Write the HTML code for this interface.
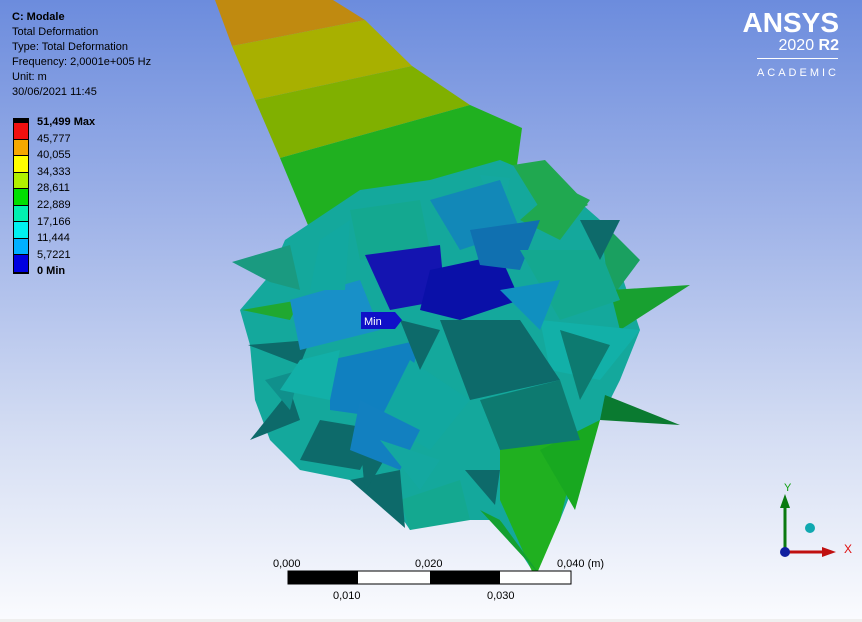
<!DOCTYPE html>
<html><head><style>
body{margin:0;width:862px;height:622px;overflow:hidden;font-family:"Liberation Sans",sans-serif;}
#bg{position:absolute;left:0;top:0;width:862px;height:619px;background:linear-gradient(#6c8cdd 0%,#9fb3e8 35%,#d4ddf3 70%,#fafbfe 100%);}
#strip{position:absolute;left:0;top:619px;width:862px;height:3px;background:#efefef;}
.t{position:absolute;font-size:11px;color:#000;line-height:15px;white-space:nowrap}
</style></head><body>
<div id="bg"></div><div id="strip"></div>
<svg style="position:absolute;left:0;top:0" width="862" height="622">
<polygon points="215,0 333,0 365,20 232,46" fill="#c08a10"/>
<polygon points="232,46 365,20 412,66 255,100" fill="#a8b000"/>
<polygon points="255,100 412,66 470,105 280,158" fill="#80b000"/>
<polygon points="280,158 470,105 522,128 515,180 310,230" fill="#20b020"/>
<polygon points="300,230 360,190 430,180 500,160 560,185 600,220 620,270 640,330 620,380 600,420 580,470 560,520 535,575 500,520 440,520 410,530 390,500 350,480 300,470 270,440 255,400 250,345 240,310 270,275 285,240" fill="#14a89c"/>
<polygon points="232,262 290,245 300,290 270,282" fill="#1a9a80"/>
<polygon points="242,310 300,300 290,320" fill="#20a830"/>
<polygon points="250,440 290,390 300,420" fill="#0d6a6a"/>
<polygon points="248,345 310,340 300,365" fill="#0d6a6a"/>
<polygon points="265,380 300,370 290,410" fill="#10908c"/>
<polygon points="600,220 640,260 610,300" fill="#1aa060"/>
<polygon points="560,185 590,200 560,240 520,220" fill="#20a850"/>
<polygon points="513,165 545,160 588,205 550,225" fill="#20a850"/>
<polygon points="480,175 510,178 500,230" fill="#14a8a0"/>
<polygon points="610,290 690,285 620,330" fill="#18a030"/>
<polygon points="605,395 680,425 600,420" fill="#0a7a30"/>
<polygon points="500,440 580,440 560,520 535,578 500,500" fill="#20b020"/>
<polygon points="540,450 600,420 575,510" fill="#18a820"/>
<polygon points="480,510 540,575 500,520" fill="#14a030"/>
<polygon points="400,500 460,480 470,520 410,530" fill="#14a890"/>
<polygon points="350,480 400,470 405,528" fill="#0d6a6a"/>
<polygon points="360,440 390,450 365,492" fill="#0d6a6a"/>
<polygon points="465,470 500,470 495,505" fill="#0d6a6a"/>
<polygon points="320,420 380,430 360,470 300,460" fill="#0d6a6a"/>
<polygon points="330,360 420,340 400,420 330,410" fill="#1080c0"/>
<polygon points="290,300 360,280 380,330 300,350" fill="#1890c8"/>
<polygon points="350,210 420,200 430,250 360,260" fill="#14a890"/>
<polygon points="430,200 500,180 520,230 460,250" fill="#1288b8"/>
<polygon points="365,255 440,245 445,300 390,310" fill="#1414b0"/>
<polygon points="430,270 500,255 520,300 460,320 420,310" fill="#0a10a8"/>
<polygon points="470,230 540,220 520,270 480,265" fill="#1070b0"/>
<polygon points="520,250 600,250 620,300 560,320" fill="#14a890"/>
<polygon points="540,320 640,330 600,380 550,370" fill="#12b0a8"/>
<polygon points="440,320 520,320 560,380 470,400" fill="#0d6a6a"/>
<polygon points="410,360 470,400 430,450 380,420" fill="#12a8a0"/>
<polygon points="480,400 560,380 580,440 500,450" fill="#0d7a70"/>
<polygon points="300,360 340,350 330,400 280,390" fill="#12b0a8"/>
<polygon points="360,400 420,430 400,470 350,450" fill="#1280c0"/>
<polygon points="580,220 620,220 600,260" fill="#0d6a6a"/>
<polygon points="320,240 350,220 345,290 310,290" fill="#12a8a0"/>
<polygon points="500,290 560,280 540,330" fill="#1090c0"/>
<polygon points="380,440 440,460 420,490" fill="#14a8a0"/>
<polygon points="560,330 610,345 580,400" fill="#0d7a70"/>
<polygon points="400,320 440,330 420,370" fill="#0d6a6a"/>
<rect x="361" y="312" width="34" height="17" fill="#1010c8"/>
<polygon points="395,312 402,320 395,329" fill="#1010c8"/>
<text x="364" y="325" font-size="11" fill="#fff" font-family="Liberation Sans">Min</text>
<rect x="13" y="118" width="16" height="156" fill="#000"/>
<rect x="14" y="123" width="14" height="16" fill="#f01010"/>
<rect x="14" y="140" width="14" height="15" fill="#f5a800"/>
<rect x="14" y="156" width="14" height="16" fill="#ffff00"/>
<rect x="14" y="173" width="14" height="15" fill="#b0f000"/>
<rect x="14" y="189" width="14" height="16" fill="#00e000"/>
<rect x="14" y="206" width="14" height="15" fill="#00f0b0"/>
<rect x="14" y="222" width="14" height="16" fill="#00f0f0"/>
<rect x="14" y="239" width="14" height="15" fill="#00b0ff"/>
<rect x="14" y="255" width="14" height="17" fill="#0000e0"/>
<text x="839" y="32" text-anchor="end" font-size="28" font-weight="bold" fill="#fff" font-family="Liberation Sans">ANSYS</text>
<text x="839" y="50" text-anchor="end" font-size="16" fill="#fff" font-family="Liberation Sans">2020 <tspan font-weight="bold">R2</tspan></text>
<rect x="757" y="58" width="81" height="1" fill="#fff"/>
<text x="839" y="76" text-anchor="end" font-size="11" letter-spacing="3" fill="#fff" font-family="Liberation Sans">ACADEMIC</text>
<rect x="288" y="571" width="283" height="13" fill="#fff" stroke="#000"/>
<rect x="288" y="571" width="70" height="13" fill="#000"/>
<rect x="430" y="571" width="70" height="13" fill="#000"/>
<g font-size="11" font-family="Liberation Sans" fill="#000">
<text x="273" y="567">0,000</text><text x="415" y="567">0,020</text><text x="557" y="567">0,040 (m)</text>
<text x="333" y="599">0,010</text><text x="487" y="599">0,030</text>
</g>
<line x1="785" y1="550" x2="785" y2="505" stroke="#0a7a10" stroke-width="3"/>
<polygon points="780,508 785,494 790,508" fill="#0a7a10"/>
<line x1="785" y1="552" x2="825" y2="552" stroke="#c01010" stroke-width="3"/>
<polygon points="822,547 836,552 822,557" fill="#c01010"/>
<circle cx="785" cy="552" r="5" fill="#1020a0"/>
<circle cx="810" cy="528" r="5" fill="#10a8b0"/>
<text x="784" y="491" font-size="11" fill="#10a010" font-family="Liberation Sans">Y</text>
<text x="844" y="553" font-size="12" fill="#e01010" font-family="Liberation Sans">X</text>
</svg>
<div class="t" style="left:12px;top:10px"><b>C: Modale</b><br>Total Deformation<br>Type: Total Deformation<br>Frequency: 2,0001e+005 Hz<br>Unit: m<br>30/06/2021 11:45</div>
<div class="t" style="left:37px;top:114px;line-height:16.6px"><b>51,499 Max</b><br>45,777<br>40,055<br>34,333<br>28,611<br>22,889<br>17,166<br>11,444<br>5,7221<br><b>0 Min</b></div>
</body></html>
